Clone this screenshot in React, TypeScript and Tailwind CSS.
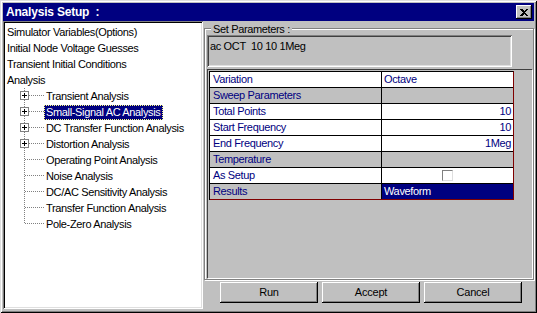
import React from 'react';

const topItems = [
  'Simulator Variables(Options)',
  'Initial Node Voltage Guesses',
  'Transient Initial Conditions',
  'Analysis',
];

const analyses = [
  { label: 'Transient Analysis', expandable: true },
  { label: 'Small-Signal AC Analysis', expandable: true, selected: true },
  { label: 'DC Transfer Function Analysis', expandable: true },
  { label: 'Distortion Analysis', expandable: true },
  { label: 'Operating Point Analysis' },
  { label: 'Noise Analysis' },
  { label: 'DC/AC Sensitivity Analysis' },
  { label: 'Transfer Function Analysis' },
  { label: 'Pole-Zero Analysis', last: true },
];

type Row = {
  label: string;
  value?: string;
  right?: boolean;
  header?: boolean;
  checkbox?: boolean;
  selected?: boolean;
};

const rows: Row[] = [
  { label: 'Variation', value: 'Octave' },
  { label: 'Sweep Parameters', header: true },
  { label: 'Total Points', value: '10', right: true },
  { label: 'Start Frequency', value: '10', right: true },
  { label: 'End Frequency', value: '1Meg', right: true },
  { label: 'Temperature', header: true },
  { label: 'As Setup', checkbox: true },
  { label: 'Results', value: 'Waveform', selected: true },
];

const Connector: React.FC<{ expandable?: boolean; last?: boolean }> = ({ expandable, last }) => (
  <svg width="39" height="16" className="shrink-0" shapeRendering="crispEdges">
    <line x1="19.5" y1="0" x2="19.5" y2={last ? 8 : 16} stroke="#808080" strokeDasharray="1 1" />
    <line x1="20" y1="7.5" x2="39" y2="7.5" stroke="#808080" strokeDasharray="1 1" />
    {expandable && (
      <>
        <rect x="15.5" y="3.5" width="8" height="8" fill="#fff" stroke="#808080" />
        <line x1="17" y1="7.5" x2="22" y2="7.5" stroke="#000" />
        <line x1="19.5" y1="5" x2="19.5" y2="10" stroke="#000" />
      </>
    )}
  </svg>
);

const Button: React.FC<{ label: string }> = ({ label }) => (
  <button className="w-[98px] h-[21px] bg-[#c0c0c0] text-black text-[11px] tracking-[-0.2px] shadow-[inset_-1px_-1px_0_#000,inset_1px_1px_0_#fff,inset_-2px_-2px_0_#808080]">
    {label}
  </button>
);

export default function App() {
  return (
    <div className="w-[537px] h-[313px] bg-[#c0c0c0] p-[3px] flex flex-col font-['Liberation_Sans',Arial,sans-serif] text-[11px] tracking-[-0.35px] leading-none shadow-[inset_1px_1px_0_#dfdfdf,inset_-1px_-1px_0_#000,inset_2px_2px_0_#fff,inset_-2px_-2px_0_#808080]">
      {/* title bar */}
      <div className="h-[18px] bg-[#000080] flex items-center justify-between pl-[3px] pr-[2px]">
        <span className="text-white font-bold text-[12px] tracking-[-0.2px]">Analysis Setup&nbsp;&nbsp;:</span>
        <div className="w-[16px] h-[14px] bg-[#c0c0c0] flex items-center justify-center shadow-[inset_-1px_-1px_0_#000,inset_1px_1px_0_#fff,inset_-2px_-2px_0_#808080]">
          <svg width="8" height="7" viewBox="0 0 8 7" shapeRendering="crispEdges">
            <path d="M0 0h2l2 2 2-2h2L5 3.5 8 7H6L4 5 2 7H0l3-3.5z" fill="#000" />
          </svg>
        </div>
      </div>

      <div className="flex flex-1 min-h-0">
        {/* tree */}
        <div className="w-[200px] h-[288px] bg-white p-[2px] pt-[3px] shadow-[inset_1px_1px_0_#808080,inset_-1px_-1px_0_#fff,inset_2px_2px_0_#000,inset_-2px_-2px_0_#dfdfdf]">
          {topItems.map((t) => (
            <div key={t} className="h-[16px] flex items-center pl-[2px] text-black whitespace-nowrap">
              {t}
            </div>
          ))}
          {analyses.map((a) => (
            <div key={a.label} className="h-[16px] flex items-center whitespace-nowrap">
              <Connector expandable={a.expandable} last={a.last} />
              <span
                className={
                  a.selected
                    ? 'h-[15px] flex items-center px-[2px] bg-[#000080] text-white outline outline-1 outline-dotted outline-[#ffff80] -outline-offset-1'
                    : 'h-[15px] flex items-center px-[2px] text-black'
                }
              >
                {a.label}
              </span>
            </div>
          ))}
        </div>

        {/* right side */}
        <div className="flex-1 flex flex-col pl-[1px]">
          <div className="relative mt-[7px] h-[252px] border border-[#808080] shadow-[1px_1px_0_#fff,inset_1px_1px_0_#fff] pl-[2px] pt-[6px] pr-[1px]">
            <span className="absolute left-[6px] -top-[5px] bg-[#c0c0c0] px-[2px] text-black">
              Set Parameters&nbsp;:
            </span>
            <div className="w-[305px] h-[32px] px-[3px] pt-[6px] text-black whitespace-pre shadow-[inset_1px_1px_0_#808080,inset_-1px_-1px_0_#fff,inset_2px_2px_0_#404040,inset_-2px_-2px_0_#dfdfdf]">
              ac OCT  10 10 1Meg
            </div>
            <div className="mt-[2px] w-[325px] h-[209px] pl-[1px] pt-[1px] border-t border-l border-[#404040] shadow-[1px_1px_0_#fff]">
              <div className="w-[305px] border-t border-l border-black border-r border-r-[#800000]">
                {rows.map((r, i) => (
                  <div
                    key={r.label}
                    className={
                      i === rows.length - 1
                        ? 'flex h-[16px] border-b border-[#800000]'
                        : 'flex h-[16px] border-b border-black'
                    }
                  >
                    <div
                      className={
                        r.header || r.selected
                          ? 'w-[172px] border-r border-black bg-[#c0c0c0] text-[#000080] pl-[3px] flex items-center'
                          : 'w-[172px] border-r border-black bg-white text-[#000080] pl-[3px] flex items-center'
                      }
                    >
                      {r.label}
                    </div>
                    <div
                      className={
                        r.header
                          ? 'flex-1 bg-[#c0c0c0]'
                          : r.selected
                          ? 'flex-1 bg-[#000080] text-white pl-[2px] flex items-center'
                          : r.checkbox
                          ? 'flex-1 bg-white flex items-center justify-center'
                          : r.right
                          ? 'flex-1 bg-white text-[#000080] pr-[2px] flex items-center justify-end'
                          : 'flex-1 bg-white text-[#000080] pl-[2px] flex items-center'
                      }
                    >
                      {r.checkbox ? (
                        <div className="w-[11px] h-[11px] bg-white border border-t-[#808080] border-l-[#808080] border-b-[#dfdfdf] border-r-[#dfdfdf]" />
                      ) : (
                        r.value
                      )}
                    </div>
                  </div>
                ))}
              </div>
            </div>
          </div>

          <div className="flex gap-[4px] pl-[16px] mt-[2px]">
            <Button label="Run" />
            <Button label="Accept" />
            <Button label="Cancel" />
          </div>
        </div>
      </div>
    </div>
  );
}
